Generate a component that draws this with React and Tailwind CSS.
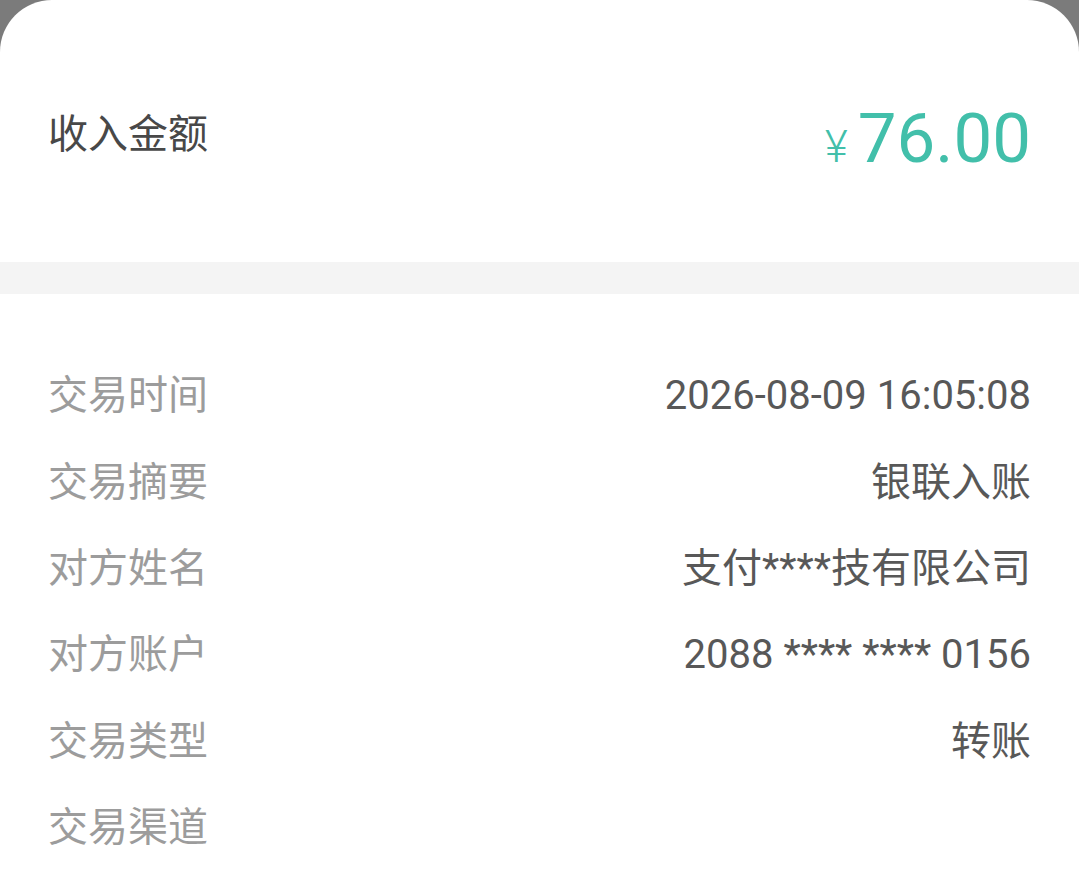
import React from "react";

const rows = [
  { label: "交易时间", value: "2026-08-09 16:05:08" },
  { label: "交易摘要", value: "银联入账" },
  { label: "对方姓名", value: "支付****技有限公司" },
  { label: "对方账户", value: "2088 **** **** 0156" },
  { label: "交易类型", value: "转账" },
  { label: "交易渠道", value: "" },
];

const App = () => {
  return (
    <div className="w-[1079px] h-[893px] bg-[#7b7b7b] overflow-hidden font-['Roboto','Noto_Sans_CJK_SC',sans-serif]">
      <div className="h-full bg-white rounded-t-[52px]">
        {/* Amount header */}
        <div className="h-[262px] flex items-center justify-between px-[48px] pt-[8px]">
          <span className="text-[40px] text-[#484848]">收入金额</span>
          <div className="flex items-baseline text-[#42bfaa] mt-[14px]">
            <span className="text-[44px] font-light mr-[10px]">¥</span>
            <span className="text-[69px] leading-none">76.00</span>
          </div>
        </div>

        <div className="h-[32px] bg-[#f4f4f4]" />

        {/* Detail rows */}
        <div className="px-[48px] pt-[59px]">
          {rows.map((row) => (
            <div
              key={row.label}
              className="h-[86.4px] flex items-center justify-between text-[40px]"
            >
              <span className="text-[#9c9c9c]">{row.label}</span>
              <span className="text-[#585858]">{row.value}</span>
            </div>
          ))}
        </div>
      </div>
    </div>
  );
};

export default App;
